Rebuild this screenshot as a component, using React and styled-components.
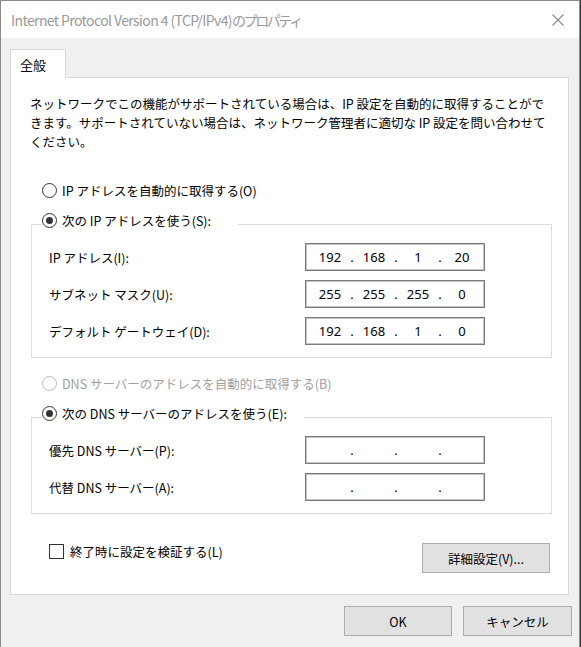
import React from 'react'
import styled, { createGlobalStyle } from 'styled-components'

const GlobalStyle = createGlobalStyle`
  html, body {
    margin: 0;
    padding: 0;
    background: #3c3c3c;
  }
  body {
    font-family: "Noto Sans CJK JP", "Noto Sans", sans-serif;
  }
`

const intro = [
  'ネットワークでこの機能がサポートされている場合は、IP 設定を自動的に取得することがで',
  'きます。サポートされていない場合は、ネットワーク管理者に適切な IP 設定を問い合わせて',
  'ください。',
]

const ipFields = [
  { label: 'IP アドレス(I):', value: ['192', '168', '1', '20'] },
  { label: 'サブネット マスク(U):', value: ['255', '255', '255', '0'] },
  { label: 'デフォルト ゲートウェイ(D):', value: ['192', '168', '1', '0'] },
]

const dnsFields = [
  { label: '優先 DNS サーバー(P):', value: ['', '', '', ''] },
  { label: '代替 DNS サーバー(A):', value: ['', '', '', ''] },
]

function IpInput({ value }) {
  return (
    <IpBox>
      {value.map((part, i) => (
        <React.Fragment key={i}>
          <Octet>{part}</Octet>
          {i < 3 && <Dot>.</Dot>}
        </React.Fragment>
      ))}
    </IpBox>
  )
}

function Radio({ checked, disabled, legend, children }) {
  return (
    <RadioRow $legend={legend} $disabled={disabled}>
      <RadioMark $disabled={disabled}>{checked && <RadioDot />}</RadioMark>
      <span>{children}</span>
    </RadioRow>
  )
}

export default function App() {
  return (
    <>
      <GlobalStyle />
      <Window>
        <TitleBar>
          <Title>
            Internet Protocol Version 4 (TCP/IPv4)<Kana>のプロパティ</Kana>
          </Title>
          <svg width="12" height="12" viewBox="0 0 12 12">
            <path d="M0.5 0.5 L11.5 11.5 M11.5 0.5 L0.5 11.5" stroke="#8a8a8a" strokeWidth="1.1" fill="none" />
          </svg>
        </TitleBar>
        <Body>
          <TabStrip>
            <Tab>全般</Tab>
          </TabStrip>
          <Panel>
            <Intro>
              {intro.map((line, i) => (
                <span key={i}>{line}</span>
              ))}
            </Intro>

            <Radio>IP アドレスを自動的に取得する(O)</Radio>
            <Radio checked legend={196}>次の IP アドレスを使う(S):</Radio>
            <GroupBox>
              {ipFields.map(f => (
                <FieldRow key={f.label}>
                  <Label>{f.label}</Label>
                  <IpInput value={f.value} />
                </FieldRow>
              ))}
            </GroupBox>

            <Radio disabled>DNS サーバーのアドレスを自動的に取得する(B)</Radio>
            <Radio checked legend={262}>次の DNS サーバーのアドレスを使う(E):</Radio>
            <GroupBox>
              {dnsFields.map(f => (
                <FieldRow key={f.label}>
                  <Label>{f.label}</Label>
                  <IpInput value={f.value} />
                </FieldRow>
              ))}
            </GroupBox>

            <BottomRow>
              <CheckRow>
                <CheckBox />
                <span>終了時に設定を検証する(L)</span>
              </CheckRow>
              <AdvancedButton $width={128}>詳細設定(V)...</AdvancedButton>
            </BottomRow>
          </Panel>
          <Footer>
            <Button $width={108}>OK</Button>
            <Button $width={109}>キャンセル</Button>
          </Footer>
        </Body>
      </Window>
    </>
  )
}

const Window = styled.div`
  width: 580px;
  height: 647px;
  box-sizing: border-box;
  border: 1px solid #8a8a8a;
  border-bottom: none;
  background: #f0f0f0;
  display: flex;
  flex-direction: column;
`

const TitleBar = styled.div`
  height: 37px;
  flex: none;
  background: #fff;
  display: flex;
  align-items: center;
  justify-content: space-between;
  padding: 0 15px 0 10px;
`

const Title = styled.div`
  font-size: 14px;
  letter-spacing: -0.6px;
  color: #9a9a9a;
  white-space: nowrap;
`

const Kana = styled.span`
  letter-spacing: -2.4px;
`

const Body = styled.div`
  flex: 1;
  padding: 11px 10px 0 9px;
  display: flex;
  flex-direction: column;
`

const TabStrip = styled.div`
  display: flex;
`

const Tab = styled.div`
  width: 56px;
  height: 29px;
  box-sizing: border-box;
  border: 1px solid #d9d9d9;
  border-bottom: none;
  background: #fff;
  margin-bottom: -1px;
  position: relative;
  z-index: 1;
  display: flex;
  align-items: center;
  padding-left: 9px;
  font-size: 13px;
  color: #000;
`

const Panel = styled.div`
  height: 518px;
  box-sizing: border-box;
  border: 1px solid #d9d9d9;
  background: #fff;
  padding: 16px 16px 0 20px;
  display: flex;
  flex-direction: column;
`

const Intro = styled.p`
  margin: 0 0 29px -1px;
  font-size: 12.5px;
  line-height: 19px;
  color: #000;
  span {
    display: block;
    white-space: nowrap;
  }
`

const RadioRow = styled.div`
  height: 20px;
  display: flex;
  align-items: center;
  gap: 5px;
  margin-left: 11px;
  font-size: 12.5px;
  white-space: nowrap;
  color: ${p => (p.$disabled ? '#a0a0a0' : '#000')};
  width: ${p => (p.$legend ? `${p.$legend}px` : 'auto')};
  background: ${p => (p.$legend ? '#fff' : 'transparent')};
  position: relative;
  z-index: 1;
  margin-top: ${p => (p.$legend ? '10px' : '0')};
  margin-bottom: ${p => (p.$legend ? '-6px' : '0')};
`

const RadioMark = styled.span`
  width: 15px;
  height: 15px;
  box-sizing: border-box;
  border-radius: 50%;
  border: 1px solid ${p => (p.$disabled ? '#bcbcbc' : '#333')};
  background: #fff;
  display: flex;
  align-items: center;
  justify-content: center;
  flex: none;
`

const RadioDot = styled.span`
  width: 7px;
  height: 7px;
  border-radius: 50%;
  background: #333;
`

const GroupBox = styled.div`
  border: 1px solid #dcdcdc;
  padding: 18px 66px 12px 17px;
  display: flex;
  flex-direction: column;
  gap: 9px;
  margin-bottom: 15px;
`

const FieldRow = styled.div`
  height: 28px;
  display: flex;
  align-items: center;
  justify-content: space-between;
`

const Label = styled.span`
  font-size: 12.5px;
  color: #000;
  white-space: nowrap;
`

const IpBox = styled.div`
  width: 180px;
  height: 28px;
  box-sizing: border-box;
  border: 1px solid #7a7a7a;
  box-shadow: inset 0 0 0 1px #c4c4c4;
  background: #fff;
  padding-left: 6px;
  display: grid;
  grid-template-columns: 36px 8px 36px 8px 36px 8px 36px;
  align-items: center;
  font-family: "Noto Sans", sans-serif;
  font-size: 13px;
  color: #000;
`

const Octet = styled.span`
  text-align: center;
`

const Dot = styled.span`
  text-align: center;
`

const BottomRow = styled.div`
  margin-top: 12px;
  display: flex;
  justify-content: space-between;
  align-items: flex-start;
`

const CheckRow = styled.div`
  height: 20px;
  display: flex;
  align-items: center;
  gap: 6px;
  margin-left: 18px;
  font-size: 12.5px;
  color: #000;
  white-space: nowrap;
`

const CheckBox = styled.span`
  width: 15px;
  height: 15px;
  box-sizing: border-box;
  border: 1px solid #333;
  background: #fff;
`

const Button = styled.div`
  width: ${p => p.$width}px;
  height: 30px;
  box-sizing: border-box;
  border: 1px solid #adadad;
  background: #e1e1e1;
  display: flex;
  align-items: center;
  justify-content: center;
  font-size: 12.5px;
  color: #000;
  white-space: nowrap;
`

const AdvancedButton = styled(Button)`
  margin: 2px 2px 0 0;
`

const Footer = styled.div`
  margin: 11px -3px 0 0;
  display: flex;
  justify-content: flex-end;
  gap: 11px;
`
